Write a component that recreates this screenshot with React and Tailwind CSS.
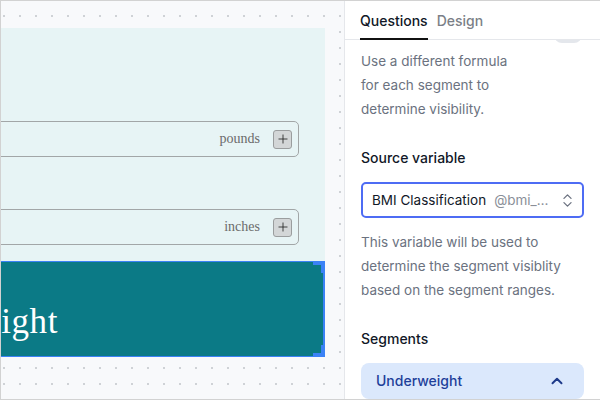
import React from "react";
import { ChevronsUpDown, ChevronUp, Plus } from "lucide-react";

const sans = { fontFamily: "Inter, 'Noto Sans', sans-serif" };
const serif = { fontFamily: "'Liberation Serif', 'DejaVu Serif', serif" };

function UnitInput({ unit }) {
  return (
    <div className="h-[36px] mr-[26px] rounded-[5px] border-[1.5px] border-[#a2a6a7] flex items-center justify-end pr-[6px]">
      <span className="text-[14px] text-[#6b6b6b] leading-5" style={serif}>
        {unit}
      </span>
      <div className="ml-[13px] w-[19px] h-[19px] rounded-[3px] bg-[#d3d6d7] border border-[#9a9d9e] flex items-center justify-center text-[#1f1f1f]">
        <Plus size={14} strokeWidth={1.4} />
      </div>
    </div>
  );
}

export default function App() {
  return (
    <div
      className="w-[600px] h-[400px] flex border-t border-l border-b border-[#d2d2d2] overflow-hidden bg-white"
      style={sans}
    >
      {/* Canvas */}
      <div className="w-[343px] shrink-0 overflow-hidden bg-[#f8f9fb] bg-[radial-gradient(circle,#cfd2d6_1px,transparent_1.3px)] bg-[size:16px_16px] bg-[position:11px_7px]">
        <div className="mt-[27px] -ml-[300px] w-[624px] bg-[#e7f4f5] flex flex-col pt-[93px]">
          <UnitInput unit="pounds" />
          <div className="h-[52px]" />
          <UnitInput unit="inches" />
          <div className="h-[16px]" />
          <div className="relative h-[96px] bg-[#0b7a86] border border-r-2 border-[#3b82f6] pt-[42px]">
            <div className="w-[356px] flex justify-end whitespace-nowrap">
              <span className="text-[35px] leading-none tracking-[0.6px] text-white" style={serif}>
                Underweight
              </span>
            </div>
            <div className="absolute -top-px -right-[2px] w-[12px] h-[12px] border-t-4 border-r-4 border-[#3b82f6]" />
            <div className="absolute -bottom-px -right-[2px] w-[12px] h-[12px] border-b-4 border-r-4 border-[#3b82f6]" />
          </div>
        </div>
      </div>

      {/* Right panel */}
      <div className="w-[256px] shrink-0 border-l border-[#e5e7eb] bg-white flex flex-col">
        <div className="h-[39px] shrink-0 border-b border-[#e5e7eb] flex pl-[15px] gap-[9px]">
          <div className="relative pt-[7px]">
            <span className="text-[14px] leading-5 font-medium text-[#111827]">Questions</span>
            <div className="absolute left-0 right-0 -bottom-px h-[2px] bg-[#111111]" />
          </div>
          <div className="pt-[7px]">
            <span className="text-[14px] leading-5 font-medium text-[#7b7f87]">Design</span>
          </div>
        </div>

        <div className="flex-1 overflow-hidden">
          <div className="-mt-[13px] px-[16px] flex flex-col">
            <div className="flex justify-end pr-[2px]">
              <div className="w-[28px] h-[16px] rounded-full bg-[#e4e7ec]" />
            </div>
            <p className="mt-[6px] w-[165px] text-[13.5px] leading-6 text-[#6b7280]">
              Use a different formula for each segment to determine visibility.
            </p>
            <div className="mt-[27px] text-[14px] leading-5 font-medium text-[#111827]">
              Source variable
            </div>
            <div className="mt-[14px] h-[36px] rounded-[5px] border-2 border-[#4e6cf4] flex items-center pl-[9px] pr-[6px]">
              <span className="shrink-0 text-[13.5px] text-[#111827]">BMI Classification</span>
              <span className="ml-[8px] flex-1 min-w-0 truncate text-[13.5px] text-[#8a8f98]">
                @bmi_classification
              </span>
              <ChevronsUpDown size={17} strokeWidth={1.8} className="ml-[10px] shrink-0 text-[#6b7280]" />
            </div>
            <p className="mt-[12px] text-[13.5px] leading-6 text-[#6b7280]">
              This variable will be used to determine the segment visiblity based on the segment ranges.
            </p>
            <div className="mt-[27px] text-[14px] leading-5 font-medium text-[#111827]">Segments</div>
            <div className="mt-[14px] rounded-[8px] bg-[#dbe8fc] flex items-center justify-between pl-[15px] pr-[18px] py-[8px]">
              <span className="text-[14px] leading-5 font-medium text-[#1e3f9a]">Underweight</span>
              <ChevronUp size={18} strokeWidth={2.6} className="text-[#1e3a8a]" />
            </div>
          </div>
        </div>
      </div>
    </div>
  );
}
